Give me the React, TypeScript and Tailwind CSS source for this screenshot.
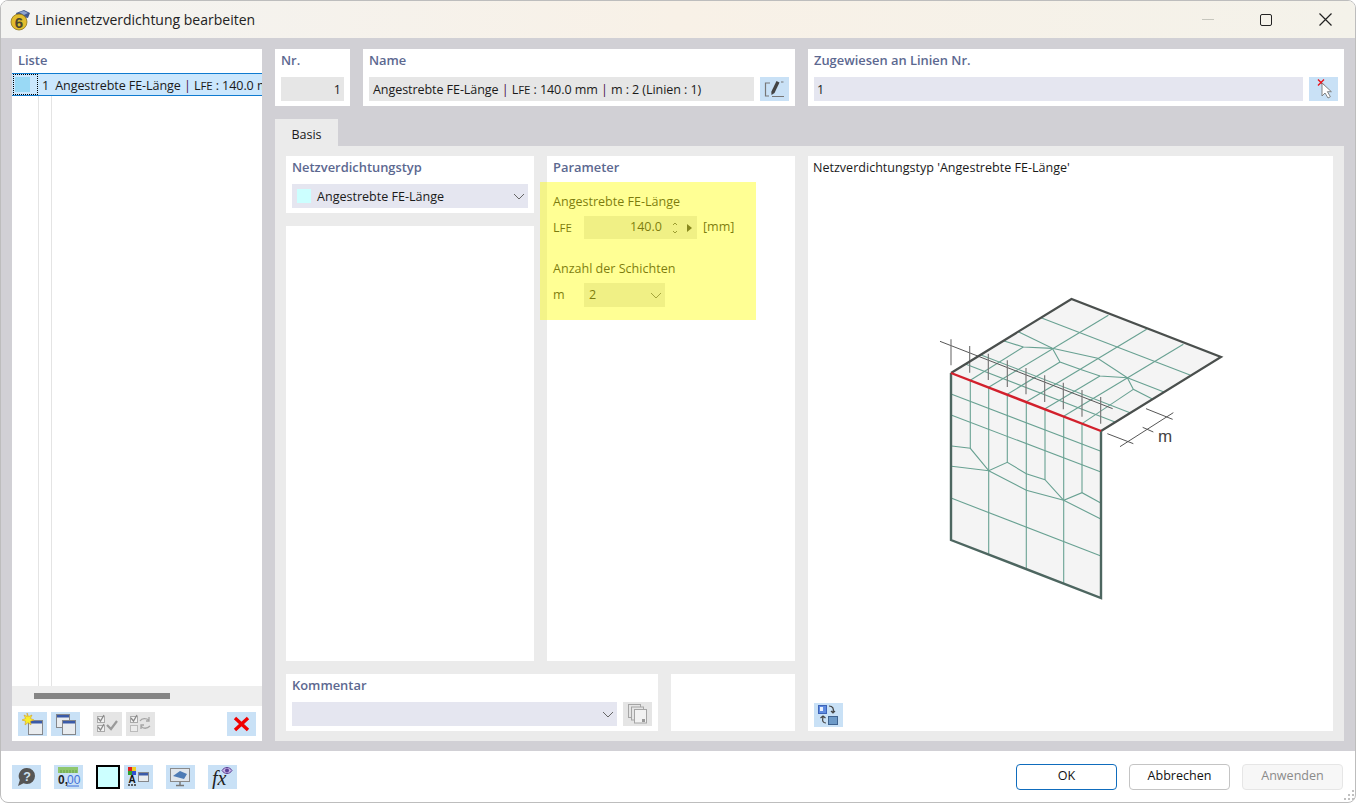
const font = { fontFamily: '"Open Sans", "Noto Sans", sans-serif' };

const IconBox = ({ gray, children }: { gray?: boolean; children: React.ReactNode }) => (
  <div className={`h-6 w-[29px] shrink-0 ${gray ? "bg-[#e5e5e5]" : "bg-[#c9e1f6]"}`}>
    <svg width="29" height="24" viewBox="0 0 29 24">
      {children}
    </svg>
  </div>
);

const Win = ({ x, y, w, h }: { x: number; y: number; w: number; h: number }) => (
  <g>
    <rect x={x + 0.5} y={y + 0.5} width={w} height={h} fill="#e9ecef" stroke="#85878b" />
    <rect x={x + 1} y={y + 1} width={w - 1} height="2.5" fill="#3a5aa8" />
  </g>
);

const Chevron = ({ color = "#666" }: { color?: string }) => (
  <svg width="12" height="7" viewBox="0 0 12 7" className="shrink-0">
    <path d="M1 1l5 5 5-5" fill="none" stroke={color} strokeWidth="1" />
  </svg>
);

const Lfe = () => (
  <span>
    L<span className="text-[11.5px]">FE</span>
  </span>
);

const Bar = () => <span className="text-[#4b0d4b]">|</span>;

const SectionTitle = ({ children }: { children: React.ReactNode }) => (
  <div className="h-4 text-[12.9px] font-semibold leading-[14px] text-[#5c6890]">{children}</div>
);

const AppIcon = () => (
  <svg width="22" height="22" viewBox="0 0 22 22" className="shrink-0">
    <path d="M7 4l8-3 6 3-2 5-6-1-5-1z" fill="#44598c" />
    <path d="M10 3l5-1 4 2-4 2z" fill="#8ea4cf" />
    <circle cx="10" cy="13" r="8" fill="#e3bd2e" stroke="#8c7420" strokeWidth="0.8" />
    <text x="10" y="18.500" textAnchor="middle" fontSize="15" fontWeight="700" fill="#4a4630" fontFamily="Liberation Sans, sans-serif">
      6
    </text>
  </svg>
);

const topMesh = [
  "M363 95L810 267",
  "M295 137L397 187L533 217L622 275L732 318",
  "M250 164L310 183L397 187",
  "M136 234L585 408",
  "M181 206L630 380",
  "M151 283L310 183",
  "M206 304L565 88",
  "M262 325L420 228",
  "M319 347L680 130",
  "M374 369L540 270",
  "M431 391L790 175",
  "M486 413L640 310",
  "M397 187L420 228L480 250L540 270L622 275L640 310L697 339",
];

const frontMesh = [
  "M951.7 393.3L1100.3 450",
  "M951.7 414.3L1100.3 470.7",
  "M951.7 445L970.3 447.3L988.7 469.7",
  "M951.7 465.3L988.7 469.7L1007.3 461.3L1026.3 472.7L1045 478.7L1063.7 499.3L1082 491.7L1100.3 501.7",
  "M988.7 469.7L1026.3 489.3L1063.7 499.3L1100.3 517.7",
  "M951.7 497.3L1100.3 554.7",
  "M970.3 379.5V447.3",
  "M988.7 386.6V552.7",
  "M1007.3 393.8V461.3",
  "M1026.3 401V567",
  "M1045 408.4V478.7",
  "M1063.7 415.6V582.7",
  "M1082 422.6V491.7",
];

const ticks = [
  [93, 160, 238],
  [149, 180, 260],
  [205, 203, 282],
  [262, 223, 303],
  [318, 246, 325],
  [374, 268, 348],
  [430, 290, 370],
  [486, 312, 392],
  [542, 333, 413],
];

const Sketch = () => (
  <svg width="300" height="320" viewBox="930 290 300 320" className="ml-[122px] mt-[115px] shrink-0">
    <path d="M951 372L1071.5 298L1221 356L1101 430Z" fill="#f4f4f4" />
    <path d="M951 372L1101 430V597L951 539Z" fill="#f4f4f4" />
    <g fill="none" stroke="#68a192" strokeWidth="1.1">
      {frontMesh.map((d) => (
        <path key={d} d={d} />
      ))}
    </g>
    <g transform="translate(920 285) scale(0.33333)" fill="none">
      <g stroke="#68a192" strokeWidth="3.3">
        {topMesh.map((d) => (
          <path key={d} d={d} />
        ))}
      </g>
      <path d="M60 166L578 368M678 368L758 400M562 443L640 473M600 482L760 380M668 424L700 438" stroke="#555" strokeWidth="3" />
      {ticks.map(([x, a, b]) => (
        <path key={x} d={`M${x} ${a}V${b}`} stroke="#777" strokeWidth="3.5" />
      ))}
    </g>
    <path d="M951 372L1071.5 298L1221 356L1101 430" fill="none" stroke="#4a4f4d" strokeWidth="2.2" />
    <path d="M1101 430V597L951 539V372" fill="none" stroke="#4d6660" strokeWidth="2.4" />
    <path d="M951 372L1101 430" stroke="#d2202c" strokeWidth="2.4" />
    <text x="1158" y="441" fontSize="17" fill="#444" fontFamily="Liberation Sans, sans-serif">
      m
    </text>
  </svg>
);

export default function App() {
  return (
    <div
      style={font}
      className="box-border flex h-[803px] w-[1356px] flex-col overflow-hidden rounded-lg border border-[#bdbdbd] bg-white text-[12.55px] text-[#1a1a1a]"
    >
      {/* title bar */}
      <div className="flex h-[37px] shrink-0 items-center bg-gradient-to-r from-[#f3f3f1] via-[#f8f1e7] to-[#f4f2ea] pl-[8px]">
        <AppIcon />
        <span className="ml-[4px] text-[14px] text-[#222]">Liniennetzverdichtung bearbeiten</span>
        <div className="ml-auto flex items-center">
          <div className="mr-[46px] h-px w-3 bg-[#c6c6bd]" />
          <div className="mr-[47px] h-3 w-3 rounded-[2px] border-[1.5px] border-[#222]" />
          <svg width="13" height="13" viewBox="0 0 13 13" className="mr-[23px]">
            <path d="M.5.5l12 12M12.500.5l-12 12" stroke="#222" strokeWidth="1.2" />
          </svg>
        </div>
      </div>

      {/* main area */}
      <div className="flex h-[713px] shrink-0 gap-[13px] bg-[#d1d0d5] pl-[11px] pt-[11px]">
        {/* list */}
        <div className="flex h-[692px] w-[250px] flex-col bg-white">
          <div className="h-[24px] px-[6px] pt-[4px]">
            <SectionTitle>Liste</SectionTitle>
          </div>
          <div className="box-border flex h-[23px] items-center overflow-hidden whitespace-nowrap border-y border-[#0f7bd0] bg-[#cbe7fd]">
            <div className="ml-[1px] flex h-[21px] w-[25px] shrink-0 items-center border border-dotted border-black pl-[1px]">
              <div className="h-[15px] w-[15px] bg-[#99d9f5]" />
            </div>
            <span className="ml-[4px] pt-[3px]">1</span>
            <span className="ml-[6px] pt-[3px] tracking-[-0.08px]">
              Angestrebte FE-Länge <Bar /> <Lfe /> : 140.0 mm
            </span>
          </div>
          <div className="flex flex-1">
            <div className="w-[27px] border-r border-[#e4e4e4]" />
            <div className="w-[13px] border-r border-[#e4e4e4]" />
          </div>
          <div className="flex h-[20px] items-center bg-[#eeeeee] pl-[22px]">
            <div className="h-[6px] w-[136px] bg-[#858585]" />
          </div>
          <div className="flex h-[35px] items-start gap-[4px] pl-[6px] pr-[6px] pt-[6px]">
            <div className="flex gap-[4px]">
              <IconBox>
                <Win x={10} y={8} w={14} h={14} />
                <path d="M9 1l1.600 3.600L14 3l-1.600 3.400L16 8l-3.600 1.200L13 13l-3-2.400L7 13l.6-3.800L4 8l3.600-1.600L6 3l3.400 1.600z" fill="#f8ee2a" stroke="#d8a020" strokeWidth="0.6" />
              </IconBox>
              <IconBox>
                <Win x={5} y={2} w={13} h={13} />
                <Win x={11} y={8} w={13} h={14} />
              </IconBox>
            </div>
            <div className="ml-[9px] flex gap-[4px]">
              <IconBox gray>
                <rect x="4.500" y="4.500" width="7" height="6" fill="#f2f2f2" stroke="#aaa" />
                <rect x="4.500" y="13.500" width="7" height="6" fill="#f2f2f2" stroke="#aaa" />
                <path d="M5 6l2.500 3L11 3M5 15l2.500 3L11 12" fill="none" stroke="#8a8a8a" strokeWidth="1.300" />
                <path d="M14 13l4 4 6-8" fill="none" stroke="#9a9a9a" strokeWidth="2.200" />
              </IconBox>
              <IconBox gray>
                <rect x="4.500" y="4.500" width="7" height="6" fill="#f2f2f2" stroke="#aaa" />
                <rect x="4.500" y="13.500" width="7" height="6" fill="#ececec" stroke="#bbb" />
                <path d="M5 6l2.500 3L11 3" fill="none" stroke="#8a8a8a" strokeWidth="1.300" />
                <path d="M14 9c2-3 6-3 9-1M24 14c-3 3-7 3-9 0M23 5v4h-3M15 17v-4h3" fill="none" stroke="#a5a5a5" strokeWidth="1.300" />
              </IconBox>
            </div>
            <div className="ml-auto">
              <IconBox>
                <path d="M8 6l13 12M21 6L8 18" stroke="#f00000" strokeWidth="3.400" />
              </IconBox>
            </div>
          </div>
        </div>

        {/* right side */}
        <div className="flex w-[1069px] flex-col">
          <div className="flex h-[57px] gap-[13px]">
            <div className="flex w-[75px] flex-col bg-white px-[6px] pt-[4px]">
              <SectionTitle>Nr.</SectionTitle>
              <div className="mt-[8px] flex h-6 items-center justify-end bg-[#e6e6e6] pr-[3px] pt-[2px]">1</div>
            </div>
            <div className="flex w-[432px] flex-col bg-white px-[6px] pt-[4px]">
              <SectionTitle>Name</SectionTitle>
              <div className="mt-[8px] flex gap-[6px]">
                <div className="flex h-6 w-[385px] items-center bg-[#e6e6e6] pl-[4px] pt-[2px] tracking-[-0.08px]">
                  <span>
                    Angestrebte FE-Länge <Bar /> <Lfe /> : 140.0 mm <Bar /> m : 2 (Linien : 1)
                  </span>
                </div>
                <IconBox>
                  <path d="M10 6H5.500v13H9" fill="none" stroke="#777" strokeWidth="1.200" />
                  <path d="M16.500 4l3 1.500-5 10.500-3 2-.2-3.200z" fill="#444" />
                  <path d="M21 5h2.500M12 19.500h12" stroke="#777" strokeWidth="1.200" />
                </IconBox>
              </div>
            </div>
            <div className="flex w-[536px] flex-col bg-white px-[6px] pt-[4px]">
              <SectionTitle>Zugewiesen an Linien Nr.</SectionTitle>
              <div className="mt-[8px] flex gap-[6px]">
                <div className="flex h-6 w-[489px] items-center bg-[#e5e6f0] pl-[3px] pt-[2px]">1</div>
                <IconBox>
                  <path d="M9 2.500l6 6M15 2.500l-6 6" stroke="#e8141c" strokeWidth="1.400" />
                  <path d="M13 6v13l3-3 3 5 2.400-1.300-3-5h4z" fill="#fff" stroke="#777" strokeWidth="0.9" />
                </IconBox>
              </div>
            </div>
          </div>

          {/* tab */}
          <div className="mt-[13px] flex h-[27px] w-[63px] items-center justify-center bg-[#ebebeb] pt-[5px]">Basis</div>
          <div className="flex h-[595px] gap-[13px] bg-[#ebebeb] pl-[11px] pt-[10px]">
            <div className="flex w-[509px] flex-col gap-[13px]">
              <div className="flex h-[505px] gap-[13px]">
                <div className="flex w-[248px] flex-col gap-[13px]">
                  <div className="h-[57px] bg-white px-[6px] pt-[4px]">
                    <SectionTitle>Netzverdichtungstyp</SectionTitle>
                    <div className="mt-[8px] flex h-6 items-center bg-[#e5e6f0] pl-[5px] pr-[3px]">
                      <div className="h-[14px] w-[14px] bg-[#ccffff]" />
                      <span className="ml-[6px] pt-[2px]">Angestrebte FE-Länge</span>
                      <div className="ml-auto">
                        <Chevron />
                      </div>
                    </div>
                  </div>
                  <div className="flex-1 bg-white" />
                </div>

                <div className="relative w-[248px] bg-white px-[6px] pt-[4px]">
                  <SectionTitle>Parameter</SectionTitle>
                  <div className="mt-[18px] leading-4">Angestrebte FE-Länge</div>
                  <div className="mt-[6px] flex h-[23px] items-center">
                    <span className="w-[31px] pt-[1px]">
                      <Lfe />
                    </span>
                    <div className="flex h-[23px] w-[113px] items-center justify-end bg-[#e6e6e6]">
                      <span>140.0</span>
                      <svg width="33" height="16" viewBox="0 0 33 16" className="ml-[2px]">
                        <path d="M9 5l2-2 2 2M9 11l2 2 2-2" fill="none" stroke="#555" strokeWidth="1" />
                        <path d="M23 4l5 4-5 4z" fill="#333" />
                      </svg>
                    </div>
                    <span className="ml-[6px]">[mm]</span>
                  </div>
                  <div className="mt-[22px] leading-4">Anzahl der Schichten</div>
                  <div className="mt-[6px] flex h-6 items-center">
                    <span className="w-[31px] pt-[1px]">m</span>
                    <div className="flex h-6 w-[81px] items-center justify-between bg-[#e6e6e6] pl-[5px] pr-[3px]">
                      <span>2</span>
                      <Chevron />
                    </div>
                  </div>
                  {/* highlight over the parameter group */}
                  <div className="absolute left-[-7px] top-[26px] h-[138px] w-[216px] bg-[rgba(255,255,0,0.42)]" />
                </div>
              </div>

              <div className="flex h-[57px] gap-[13px]">
                <div className="w-[372px] bg-white px-[6px] pt-[4px]">
                  <SectionTitle>Kommentar</SectionTitle>
                  <div className="mt-[8px] flex gap-[6px]">
                    <div className="flex h-6 w-[325px] items-center justify-end bg-[#e5e6f0] pr-[3px]">
                      <Chevron />
                    </div>
                    <IconBox gray>
                      <rect x="5.500" y="2.500" width="12" height="13" fill="#e5e5e5" stroke="#a5a5a5" />
                      <rect x="8.500" y="5" width="12" height="13" fill="#e5e5e5" stroke="#a5a5a5" />
                      <rect x="11.500" y="7.500" width="12" height="13.500" fill="#f2f2f2" stroke="#a5a5a5" />
                      <rect x="19" y="17" width="3" height="3" fill="#999" />
                    </IconBox>
                  </div>
                </div>
                <div className="w-[124px] bg-white" />
              </div>
            </div>

            <div className="flex h-[575px] w-[525px] flex-col bg-white">
              <div className="pl-[5px] pt-[4px] leading-4">Netzverdichtungstyp 'Angestrebte FE-Länge'</div>
              <Sketch />
              <div className="ml-[6px] mt-auto mb-[4px]">
                <IconBox>
                  <rect x="4.500" y="2.500" width="8" height="8" fill="#5f8be0" stroke="#3d64b8" />
                  <rect x="6" y="4" width="3" height="4" fill="#e8f0ff" />
                  <path d="M15 3c4 0 5 3 4 6M17 8l2 2 2-2M12 20c-3 0-4-2-3-6M6.500 15l2.500-2 2.500 2" fill="none" stroke="#444" strokeWidth="1.200" />
                  <rect x="14.500" y="13.500" width="9" height="8" fill="#6d9ac8" stroke="#3f6390" />
                </IconBox>
              </div>
            </div>
          </div>
        </div>
      </div>

      {/* footer */}
      <div className="flex flex-1 items-center pl-[11px]">
        <IconBox>
          <path d="M15 3a8 8 0 0 1 0 16 8 8 0 0 1-3.500-.8L6 21l1.800-6a8 8 0 0 1 7.200-12z" fill="#555" />
          <text x="15" y="15.500" textAnchor="middle" fontSize="12.500" fontWeight="700" fill="#cfe1f1" fontFamily="Liberation Sans, sans-serif">
            ?
          </text>
        </IconBox>
        <div className="ml-[13px]">
          <IconBox>
            <rect x="4" y="2" width="20" height="6" fill="#8fc76e" />
            <path d="M7 5v3M10 5v3M13 5v3M16 5v3M19 5v3M22 5v3" stroke="#5d9640" strokeWidth="0.8" />
            <text x="4" y="19" fontSize="12" fontWeight="700" fill="#222" fontFamily="Liberation Sans, sans-serif">
              0,
            </text>
            <text x="13" y="19" fontSize="12" fill="#3f6fd8" fontFamily="Liberation Sans, sans-serif">
              00
            </text>
            <path d="M13 21h12" stroke="#3f6fd8" />
          </IconBox>
        </div>
        <div className="ml-[13px] box-border h-6 w-6 border-2 border-black bg-[#ccffff]" />
        <div className="ml-[4px]">
          <IconBox>
            <rect x="4" y="2" width="4" height="4" fill="#e02020" />
            <rect x="8" y="2" width="4" height="4" fill="#f0d020" />
            <rect x="4" y="6" width="4" height="4" fill="#30a030" />
            <rect x="8" y="6" width="4" height="4" fill="#3050d0" />
            <text x="8" y="18" textAnchor="middle" fontSize="10" fontWeight="700" fill="#111" fontFamily="Liberation Sans, sans-serif">
              A
            </text>
            <path d="M4 20h8" stroke="#333" strokeWidth="1.500" strokeDasharray="2 1" />
            <Win x={14} y={7} w={10} h={9} />
          </IconBox>
        </div>
        <div className="ml-[13px]">
          <IconBox>
            <rect x="4.500" y="3.500" width="19" height="13" fill="#dfe5ec" stroke="#8a8a8a" />
            <path d="M7 11l7-5 7 3-3 5z" fill="#4e7bb5" />
            <path d="M14 17v3M10 20.500h8" stroke="#777" strokeWidth="1.500" />
          </IconBox>
        </div>
        <div className="ml-[13px]">
          <IconBox>
            <text x="4" y="20" fontSize="20" fontStyle="italic" fill="#222" fontFamily="Liberation Serif, serif">
              fx
            </text>
            <path d="M14 5.500c2.500-4 7.500-4 10 0-2.500 4-7.500 4-10 0z" fill="#c9b8e8" stroke="#5b3f96" />
            <circle cx="19" cy="5.500" r="2" fill="#5b3f96" />
          </IconBox>
        </div>

        <div className="ml-auto mr-[12px] flex gap-3">
          <div className="box-border flex h-[26px] w-[101px] items-center justify-center rounded-[4px] border border-[#0f6cbd] text-[#111]">OK</div>
          <div className="box-border flex h-[26px] w-[101px] items-center justify-center rounded-[4px] border border-[#c4c4c4] text-[#111]">Abbrechen</div>
          <div className="box-border flex h-[26px] w-[101px] items-center justify-center rounded-[4px] border border-[#e6e6e6] bg-[#f7f7f7] text-[#8a8a8a]">Anwenden</div>
        </div>
        <svg width="12" height="12" viewBox="0 0 12 12" className="absolute left-[1344px] top-[789px]">
          <path d="M8 1h2v2H8zM4 5h2v2H4zM8 5h2v2H8zM0 9h2v2H0zM4 9h2v2H4zM8 9h2v2H8z" fill="#c0c0c0" />
        </svg>
      </div>
    </div>
  );
}
